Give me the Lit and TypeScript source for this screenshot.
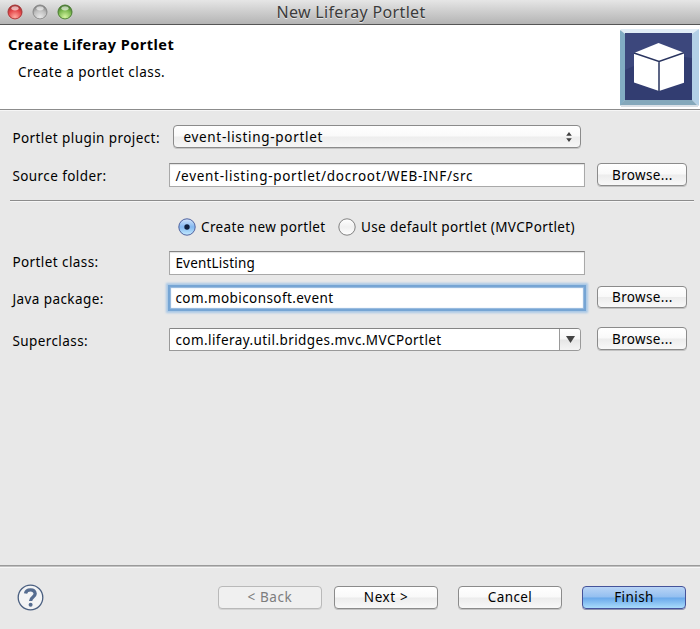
import { LitElement, html, css, svg } from "lit";
import { customElement } from "lit/decorators.js";

@customElement("app-root")
export class AppRoot extends LitElement {
  static styles = css`
    :host {
      display: flex;
      flex-direction: column;
      width: 700px;
      height: 629px;
      overflow: hidden;
      background: #e8e8e8;
      color: #000;
      font: 13.5px/20px "Noto Sans", "Open Sans", sans-serif;
      letter-spacing: 0.42px;
      white-space: nowrap;
    }
    * { box-sizing: border-box; }
    .titlebar {
      height: 25px;
      flex: none;
      display: grid;
      grid-template-columns: 100px 1fr 98px;
      align-items: center;
      background: linear-gradient(#e6e6e6, #cfcfcf 45%, #b4b4b4);
      border-bottom: 1px solid #555;
    }
    .lights { display: flex; gap: 9px; padding-left: 7px; }
    .light { width: 16px; height: 16px; display: block; }
    .title { text-align: center; font-size: 16px; letter-spacing: 0.33px; color: #3b3b3b; text-shadow: 0 1px 0 #e8e8e8; }
    .banner {
      height: 85px;
      flex: none;
      display: flex;
      justify-content: space-between;
      background: #fff;
      border-bottom: 1px solid #8c8c8c;
    }
    .heading { padding: 9px 0 0 8px; font-weight: 700; font-size: 14.5px; letter-spacing: 0.5px; }
    .sub { padding: 8px 0 0 18px; letter-spacing: 0.46px; }
    .logo { display: block; width: 80px; height: 84px; }
    .form { height: 455px; flex: none; border-top: 1px solid #f6f6f6; }
    .row { display: grid; grid-template-columns: 157px 428px 90px; padding-left: 12.4px; align-items: start; }
    .r1 { height: 52px; padding-top: 14px; }
    .r2 { height: 37px; }
    .r4 { height: 35px; }
    .r5 { height: 42px; }
    .r6 { height: 30px; }
    .label { padding-top: 3px; }
    .r4 .label { padding-top: 1px; }
    .select {
      margin-left: 4px;
      width: 408px;
      height: 23px;
      padding: 0 7px 0 9px;
      display: flex;
      justify-content: space-between;
      align-items: center;
      border: 1px solid #8b8b8b;
      border-radius: 4px;
      background: linear-gradient(#fff, #fafafa 48%, #ededed 52%, #f6f6f6);
      box-shadow: 0 1px 0 #c6c6c6;
      letter-spacing: 0.7px;
    }
    .arrows { width: 8px; height: 12px; }
    .field {
      width: 416px;
      height: 24px;
      padding: 2px 6px 0 5px;
      background: #fff;
      border: 1px solid #a9a9a9;
      border-top-color: #858585;
      box-shadow: inset 0 1px 1px #e2e2e2;
    }
    .path { letter-spacing: 0.71px; }
    .cls { letter-spacing: 0.2px; padding-top: 1px; }
    .focus {
      padding-top: 1px;
      border-color: #76a5d4;
      box-shadow: 0 0 0 1px #76a5d4, 0 0 2px 3px #a9c8e6, inset 0 0 1px 1px #8eb4dc;
    }
    .btn {
      width: 90px;
      height: 23px;
      padding-bottom: 1px;
      display: flex;
      justify-content: center;
      align-items: center;
      border: 1px solid #8b8b8b;
      border-radius: 4px;
      background: linear-gradient(#fff, #f9f9f9 48%, #ececec 52%, #f8f8f8);
      box-shadow: 0 1px 0 #c2c2c2;
    }
    .row .btn { padding: 0; letter-spacing: 0.36px; }
    .r5 .btn { height: 22px; }
    .r6 .btn { margin-top: -1px; }
    .rule { margin: 0 6px 0 10px; height: 2px; background: #8c8c8c; border-bottom: 1px solid #f6f6f6; }
    .radios { display: flex; height: 49px; padding: 15px 0 0 178px; }
    .radio { width: 18px; height: 18px; margin: 1px 5px 0 0; display: block; }
    .first { width: 160px; }
    .choice { display: flex; letter-spacing: 0.38px; }
    .combo {
      width: 412px;
      height: 23px;
      display: flex;
      background: #fff;
      border: 1px solid #999;
      border-top-color: #858585;
      border-radius: 0 4px 4px 0;
    }
    .combotext { flex: 1; padding: 1px 0 0 5px; letter-spacing: 0.43px; }
    .drop {
      width: 21px;
      display: flex;
      align-items: center;
      justify-content: center;
      border-left: 1px solid #999;
      border-radius: 0 3px 3px 0;
      background: linear-gradient(#fff, #f6f6f6 48%, #e6e6e6 52%, #f4f4f4);
    }
    .tri { width: 9px; height: 7px; }
    .footer {
      flex: 1;
      display: flex;
      align-items: flex-start;
      border-top: 1px solid #9a9a9a;
      box-shadow: inset 0 1px 0 #c0c0c0, inset 0 2px 0 #f6f6f6;
      padding: 18px 0 0 17px;
    }
    .help { width: 27px; height: 27px; display: block; }
    .actions { display: flex; gap: 20px; margin-left: 174px; }
    .actions .btn { width: 104px; margin-top: 2px; }
    .actions .back { margin-right: -8px; letter-spacing: 0.6px; color: #7d7d7d; border-color: #b9b9b9; background: #f0f0f0; box-shadow: 0 1px 0 #d4d4d4; }
    .actions .next { letter-spacing: 0.6px; }
    .actions .finish { border-color: #45539a; background: linear-gradient(#b9d4f5, #93bff0 48%, #69a8ea 52%, #a9dcfb); box-shadow: 0 1px 0 #8d93ad; }
  `;

  private light(id: string, edge: string, mid: string, low: string) {
    return html`<svg class="light" viewBox="0 0 16 16">
      <defs>
        <radialGradient id=${id} cx=".5" cy=".85" r=".75">
          <stop offset="0" stop-color=${low} /><stop offset=".65" stop-color=${mid} /><stop offset="1" stop-color=${edge} />
        </radialGradient>
      </defs>
      <circle cx="8" cy="8.6" r="7.2" fill="#eee" opacity=".6" />
      <circle cx="8" cy="8" r="7" fill="url(#${id})" stroke=${edge} stroke-width="1" />
      <ellipse cx="8" cy="4.3" rx="3.6" ry="2.1" fill="#fff" opacity=".6" />
    </svg>`;
  }

  private radio(on: boolean) {
    const id = on ? "radio-on" : "radio-off";
    return html`<svg class="radio" viewBox="0 0 18 18">
      <defs>
        <linearGradient id=${id} x2="0" y2="1">
          ${on
            ? svg`<stop offset="0" stop-color="#d4e5fa" /><stop offset=".5" stop-color="#83b8f0" /><stop offset="1" stop-color="#c5ecff" />`
            : svg`<stop offset="0" stop-color="#fff" /><stop offset=".5" stop-color="#f0f0f0" /><stop offset="1" stop-color="#fff" />`}
        </linearGradient>
      </defs>
      <circle cx="9" cy="9" r="8.2" fill="url(#${id})" stroke=${on ? "#5063a0" : "#808080"} />
      ${on ? svg`<circle cx="9" cy="9" r="2.7" fill="#10213e" />` : ""}
    </svg>`;
  }

  render() {
    return html`
      <div class="titlebar">
        <div class="lights">
          ${this.light("red", "#a63334", "#e5474a", "#ffaaa0")}
          ${this.light("grey", "#878787", "#bdbdbd", "#e8e8e8")}
          ${this.light("green", "#497b31", "#7cb950", "#d4f5a0")}
        </div>
        <div class="title"><span>New Liferay Portlet</span></div>
      </div>
      <div class="banner">
        <div>
          <div class="heading"><span>Create Liferay Portlet</span></div>
          <div class="sub"><span>Create a portlet class.</span></div>
        </div>
        <svg class="logo" viewBox="620 25 80 84">
          <rect x="621" y="29" width="77" height="78" fill="#d9e0e6" />
          <path d="M620 29h79l-6 5h-68z" fill="#e1edf6" />
          <path d="M699 29v77l-7-6V34z" fill="#b3d0e6" />
          <path d="M620 30l5 4v66l-5 6z" fill="#82adc4" />
          <path d="M620 105l5-5h67l5 5z" fill="#84a8bb" />
          <rect x="625" y="33" width="67" height="67" fill="#323d71" />
          <path d="M625 33h67v25Q660 52 625 70z" fill="#3c477c" />
          <path d="M658.500 43l25.500 9.700v30L659 91l-25-8.500V53z" fill="#fff" />
          <path d="M634 53l25 8.500 25-8.800M659 61v30" fill="none" stroke="#29345f" stroke-width="1.500" />
        </svg>
      </div>
      <div class="form">
        <div class="row r1">
          <div class="label"><span>Portlet plugin project:</span></div>
          <div class="select">
            <span>event-listing-portlet</span>
            <svg class="arrows" viewBox="0 0 8 12"><path d="M1.200 4.700L4 1l2.800 3.700zM1.200 7.300L4 11l2.800-3.700z" fill="#404040" /></svg>
          </div>
        </div>
        <div class="row r2">
          <div class="label"><span>Source folder:</span></div>
          <div class="field path"><span>/event-listing-portlet/docroot/WEB-INF/src</span></div>
          <div class="btn"><span>Browse...</span></div>
        </div>
        <div class="rule"></div>
        <div class="radios">
          <div class="choice first">${this.radio(true)}<span>Create new portlet</span></div>
          <div class="choice">${this.radio(false)}<span>Use default portlet (MVCPortlet)</span></div>
        </div>
        <div class="row r4">
          <div class="label"><span>Portlet class:</span></div>
          <div class="field cls"><span>EventListing</span></div>
        </div>
        <div class="row r5">
          <div class="label"><span>Java package:</span></div>
          <div class="field focus"><span>com.mobiconsoft.event</span></div>
          <div class="btn"><span>Browse...</span></div>
        </div>
        <div class="row r6">
          <div class="label"><span>Superclass:</span></div>
          <div class="combo">
            <div class="combotext"><span>com.liferay.util.bridges.mvc.MVCPortlet</span></div>
            <div class="drop"><svg class="tri" viewBox="0 0 9 7"><path d="M0 0h9L4.500 7z" fill="#444" /></svg></div>
          </div>
          <div class="btn"><span>Browse...</span></div>
        </div>
      </div>
      <div class="footer">
        <svg class="help" viewBox="0 0 27 27">
          <circle cx="13.500" cy="13.500" r="12.300" fill="#f3f4f5" stroke="#4a5f80" stroke-width="1.300" />
          <path d="M8.500 9.500Q9.200 5.800 13.500 5.800T18.200 9.800C18.200 13 13.600 13 13.600 17" fill="none" stroke="#566d90" stroke-width="3.300" />
          <circle cx="13.600" cy="20.800" r="2" fill="#566d90" />
        </svg>
        <div class="actions">
          <div class="btn back"><span>&lt; Back</span></div>
          <div class="btn next"><span>Next &gt;</span></div>
          <div class="btn"><span>Cancel</span></div>
          <div class="btn finish"><span>Finish</span></div>
        </div>
      </div>
    `;
  }
}
